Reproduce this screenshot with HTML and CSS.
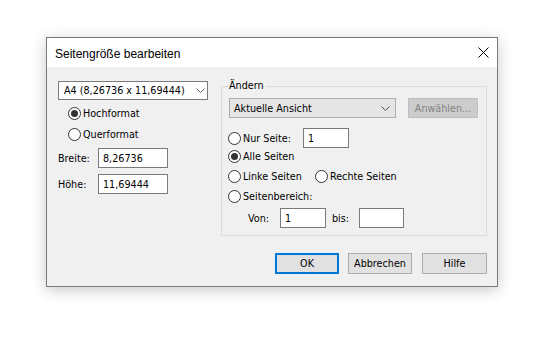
FILE: index.html
```html
<!DOCTYPE html>
<html lang="de">
<head>
<meta charset="utf-8">
<title>Seitengröße bearbeiten</title>
<link rel="stylesheet" href="styles.css">
</head>
<body>
<div class="dialog">
  <div class="titlebar">
    <span class="title">Seitengröße bearbeiten</span>
    <svg class="close" width="11" height="11" viewBox="0 0 11 11"><path d="M0.5 0.5 L10.5 10.5 M10.5 0.5 L0.5 10.5" stroke="#000" stroke-width="1" fill="none"/></svg>
  </div>
  <div class="content">
    <div class="cols">
      <div class="left">
        <div class="combo white">
          <span>A4 (8,26736 x 11,69444)</span>
          <svg class="chev" width="9" height="5" viewBox="0 0 9 5"><polyline points="0.5,0.5 4.5,4.5 8.5,0.5" fill="none" stroke="#606060" stroke-width="1"/></svg>
        </div>
        <div class="radiorow first"><span class="radio checked"></span><span>Hochformat</span></div>
        <div class="radiorow"><span class="radio"></span><span>Querformat</span></div>
        <div class="fieldrow"><span class="lbl">Breite:</span><span class="edit w70">8,26736</span></div>
        <div class="fieldrow"><span class="lbl">Höhe:</span><span class="edit w70">11,69444</span></div>
      </div>
      <div class="group">
        <span class="legend">Ändern</span>
        <div class="toprow">
          <div class="combo gray">
            <span>Aktuelle Ansicht</span>
            <svg class="chev" width="9" height="5" viewBox="0 0 9 5"><polyline points="0.5,0.5 4.5,4.5 8.5,0.5" fill="none" stroke="#505050" stroke-width="1"/></svg>
          </div>
          <div class="btn disabled">Anwählen...</div>
        </div>
        <div class="gr nur">
          <div class="radiolabel w75"><span class="radio"></span><span>Nur Seite:</span></div>
          <span class="edit w46">1</span>
        </div>
        <div class="gr small"><span class="radio checked"></span><span>Alle Seiten</span></div>
        <div class="gr small">
          <div class="radiolabel w87"><span class="radio"></span><span>Linke Seiten</span></div>
          <div class="radiolabel"><span class="radio"></span><span>Rechte Seiten</span></div>
        </div>
        <div class="gr small"><span class="radio"></span><span>Seitenbereich:</span></div>
        <div class="gr von">
          <span class="vonlbl">Von:</span>
          <span class="edit w46">1</span>
          <span class="bislbl">bis:</span>
          <span class="edit w45"></span>
        </div>
      </div>
    </div>
    <div class="buttons">
      <div class="btn default">OK</div>
      <div class="btn mid">Abbrechen</div>
      <div class="btn last">Hilfe</div>
    </div>
  </div>
</div>
</body>
</html>
```
FILE: styles.css
```css
html, body {
  margin: 0;
  padding: 0;
  background: #ffffff;
}
body {
  width: 553px;
  height: 345px;
  overflow: hidden;
  padding: 37px 0 0 46px;
  box-sizing: border-box;
  font-family: "DejaVu Sans Condensed", "Liberation Sans", sans-serif;
  font-size: 10.7px;
  color: #000;
}
.dialog {
  width: 452px;
  height: 250px;
  box-sizing: border-box;
  border: 1px solid #7a7a7a;
  background: #f0f0f0;
  box-shadow: 0 3px 14px rgba(0, 0, 0, 0.22);
  display: flex;
  flex-direction: column;
}
.titlebar {
  height: 29px;
  flex: none;
  background: #ffffff;
  display: flex;
  align-items: center;
  justify-content: space-between;
  padding: 0 8px 0 8px;
}
.title {
  font-family: "Liberation Sans", sans-serif;
  font-size: 12px;
  color: #000;
  position: relative;
  top: 1px;
}
.close {
  display: block;
}
.content {
  flex: 1;
  padding: 14px 10px 0 11px;
}
.cols {
  display: flex;
  align-items: flex-start;
}
.left {
  width: 150px;
  flex: none;
}
.combo {
  box-sizing: border-box;
  display: flex;
  align-items: center;
  justify-content: space-between;
}
.combo.white {
  width: 150px;
  height: 19px;
  background: #ffffff;
  border: 1px solid #7a7a7a;
  padding: 0 2px 0 5px;
}
.combo.gray {
  width: 167px;
  height: 20px;
  background: #e5e5e5;
  border: 1px solid #adadad;
  padding: 0 5px 0 4px;
}
.chev {
  display: block;
}
.radio {
  width: 13px;
  height: 13px;
  box-sizing: border-box;
  border: 1px solid #333333;
  border-radius: 50%;
  background: #ffffff;
  flex: none;
  position: relative;
  margin-right: 2px;
}
.radio.checked::after {
  content: "";
  position: absolute;
  left: 2px;
  top: 2px;
  width: 7px;
  height: 7px;
  border-radius: 50%;
  background: #333333;
}
.radiorow {
  height: 16px;
  display: flex;
  align-items: center;
  margin: 5px 0 0 10px;
}
.fieldrow {
  height: 20px;
  display: flex;
  align-items: center;
  margin-top: 6px;
}
.lbl {
  width: 40px;
}
.edit {
  box-sizing: border-box;
  height: 20px;
  border: 1px solid #7a7a7a;
  background: #ffffff;
  display: flex;
  align-items: center;
  padding-left: 4px;
}
.w70 { width: 70px; }
.w46 { width: 46px; }
.w45 { width: 45px; }
.group {
  position: relative;
  box-sizing: border-box;
  width: 267px;
  height: 150px;
  margin: 5px 0 0 13px;
  border: 1px solid #dcdcdc;
  padding: 11px 8px 0 6px;
}
.legend {
  position: absolute;
  left: 6px;
  top: -8px;
  padding: 0 2px 0 1px;
  background: #f0f0f0;
  line-height: 14px;
}
.toprow {
  display: flex;
  justify-content: space-between;
  margin-left: 1px;
}
.btn {
  box-sizing: border-box;
  display: flex;
  align-items: center;
  justify-content: center;
  background: #e1e1e1;
  border: 1px solid #adadad;
}
.btn.disabled {
  width: 70px;
  height: 20px;
  background: #cccccc;
  border-color: #bfbfbf;
  color: #838383;
}
.gr {
  display: flex;
  align-items: center;
}
.gr.nur {
  height: 20px;
  margin-top: 10px;
}
.gr.small {
  height: 16px;
  margin-top: 0;
  padding-top: 4px;
  box-sizing: content-box;
}
.gr.small:first-of-type {
  padding-top: 0;
}
.nur + .gr.small {
  padding-top: 0;
}
.gr.von {
  height: 20px;
  margin-top: 4px;
}
.radiolabel {
  display: flex;
  align-items: center;
}
.w75 { width: 75px; }
.w87 { width: 87px; }
.vonlbl {
  margin-left: 20px;
  width: 32px;
}
.bislbl {
  margin-left: 6px;
  width: 27px;
}
.buttons {
  display: flex;
  justify-content: flex-end;
  margin-top: 17px;
}
.buttons .btn {
  height: 21px;
  width: 64px;
}
.btn.default {
  border: 2px solid #0078d7;
  margin-right: 9px;
}
.btn.mid {
  margin-right: 10px;
}
.btn.last {
  width: 65px;
}
```
